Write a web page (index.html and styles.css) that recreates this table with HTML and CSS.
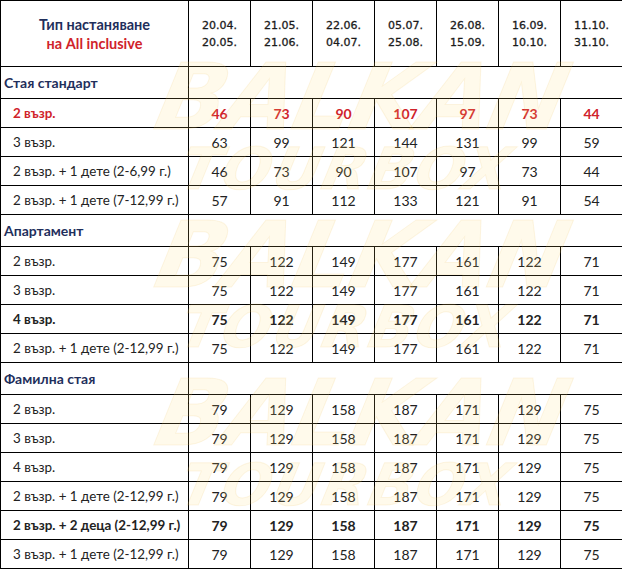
FILE: index.html
```html
<!DOCTYPE html>
<html lang="bg">
<head>
<meta charset="utf-8">
<title>Цени</title>
<link rel="stylesheet" href="styles.css">
</head>
<body>
<div class="wrap">
<table class="prices">
<colgroup><col class="c-type"><col><col><col><col><col><col><col></colgroup>
<thead>
<tr class="head">
<th class="type"><span class="navy">Тип настаняване</span><br><span class="red">на All inclusive</span></th>
<th class="date">20.04.<br>20.05.</th>
<th class="date">21.05.<br>21.06.</th>
<th class="date">22.06.<br>04.07.</th>
<th class="date">05.07.<br>25.08.</th>
<th class="date">26.08.<br>15.09.</th>
<th class="date">16.09.<br>10.10.</th>
<th class="date">11.10.<br>31.10.</th>
</tr>
</thead>
<tbody>
<tr class="section"><td class="label">Стая стандарт</td><td colspan="7"></td></tr>
<tr class="row hl"><td class="label">2 възр.</td><td>46</td><td>73</td><td>90</td><td>107</td><td>97</td><td>73</td><td>44</td></tr>
<tr class="row"><td class="label">3 възр.</td><td>63</td><td>99</td><td>121</td><td>144</td><td>131</td><td>99</td><td>59</td></tr>
<tr class="row"><td class="label">2 възр. + 1 дете (2-6,99 г.)</td><td>46</td><td>73</td><td>90</td><td>107</td><td>97</td><td>73</td><td>44</td></tr>
<tr class="row"><td class="label">2 възр. + 1 дете (7-12,99 г.)</td><td>57</td><td>91</td><td>112</td><td>133</td><td>121</td><td>91</td><td>54</td></tr>
<tr class="section"><td class="label">Апартамент</td><td colspan="7"></td></tr>
<tr class="row"><td class="label">2 възр.</td><td>75</td><td>122</td><td>149</td><td>177</td><td>161</td><td>122</td><td>71</td></tr>
<tr class="row"><td class="label">3 възр.</td><td>75</td><td>122</td><td>149</td><td>177</td><td>161</td><td>122</td><td>71</td></tr>
<tr class="row bold"><td class="label">4 възр.</td><td>75</td><td>122</td><td>149</td><td>177</td><td>161</td><td>122</td><td>71</td></tr>
<tr class="row"><td class="label">2 възр. + 1 дете (2-12,99 г.)</td><td>75</td><td>122</td><td>149</td><td>177</td><td>161</td><td>122</td><td>71</td></tr>
<tr class="section"><td class="label">Фамилна стая</td><td colspan="7"></td></tr>
<tr class="row"><td class="label">2 възр.</td><td>79</td><td>129</td><td>158</td><td>187</td><td>171</td><td>129</td><td>75</td></tr>
<tr class="row"><td class="label">3 възр.</td><td>79</td><td>129</td><td>158</td><td>187</td><td>171</td><td>129</td><td>75</td></tr>
<tr class="row"><td class="label">4 възр.</td><td>79</td><td>129</td><td>158</td><td>187</td><td>171</td><td>129</td><td>75</td></tr>
<tr class="row"><td class="label">2 възр. + 1 дете (2-12,99 г.)</td><td>79</td><td>129</td><td>158</td><td>187</td><td>171</td><td>129</td><td>75</td></tr>
<tr class="row bold"><td class="label">2 възр. + 2 деца (2-12,99 г.)</td><td>79</td><td>129</td><td>158</td><td>187</td><td>171</td><td>129</td><td>75</td></tr>
<tr class="row"><td class="label">3 възр. + 1 дете (2-12,99 г.)</td><td>79</td><td>129</td><td>158</td><td>187</td><td>171</td><td>129</td><td>75</td></tr>
</tbody>
</table>
<div class="watermark" aria-hidden="true">
<div class="wm-block"><div class="wm-big">BALKAN</div><div class="wm-small">TOURBOX</div></div>
<div class="wm-block"><div class="wm-big">BALKAN</div><div class="wm-small">TOURBOX</div></div>
<div class="wm-block"><div class="wm-big">BALKAN</div><div class="wm-small">TOURBOX</div></div>
</div>
</div>
</body>
</html>
```

FILE: styles.css
```css
html, body {
  margin: 0;
  padding: 0;
  background: #ffffff;
}

.wrap {
  position: relative;
  width: 622px;
  height: 569px;
  overflow: hidden;
}

.prices {
  border-collapse: collapse;
  table-layout: fixed;
  width: 622px;
  font-family: Lato, "Open Sans", sans-serif;
  font-size: 14px;
  color: #222222;
}

.prices col { width: 62px; }
.prices col.c-type { width: 188px; }

.prices th,
.prices td {
  border: 1px solid #000000;
  padding: 0;
  text-align: center;
  vertical-align: middle;
}

.head { height: 66px; }

.type {
  font-weight: 700;
  font-size: 14.5px;
  line-height: 19px;
  padding-top: 2px;
}

.navy { color: #1f2f5c; }
.red { color: #d0232b; }

.date {
  font-family: "DejaVu Sans", Verdana, sans-serif;
  font-weight: 400;
  font-size: 11px;
  line-height: 17px;
  color: #1b1b1b;
  -webkit-text-stroke: 0.3px #1b1b1b;
}

.section { height: 32px; }
.section .label {
  text-align: left;
  padding-left: 3px;
  font-weight: 700;
  color: #1f2f5c;
}

.row { height: 29px; }
.row .label {
  text-align: left;
  padding-left: 12px;
  white-space: nowrap;
  font-size: 13.4px;
}

.row.hl td {
  color: #d0232b;
  font-weight: 700;
}

.row.bold td { font-weight: 700; }

.watermark {
  position: absolute;
  left: 125px;
  top: 52px;
  width: 460px;
  pointer-events: none;
  font-family: "DejaVu Sans", sans-serif;
  font-weight: 700;
  font-style: italic;
  color: rgba(255, 220, 110, 0.14);
  -webkit-text-stroke: 1px rgba(235, 185, 80, 0.13);
  line-height: 1;
}

.wm-block {
  height: 158px;
  transform: skewX(-12deg);
}

.wm-big {
  font-size: 92px;
  letter-spacing: -2px;
  text-align: center;
}

.wm-small {
  font-size: 58px;
  letter-spacing: 2px;
  text-align: center;
  margin-top: -4px;
}
```
